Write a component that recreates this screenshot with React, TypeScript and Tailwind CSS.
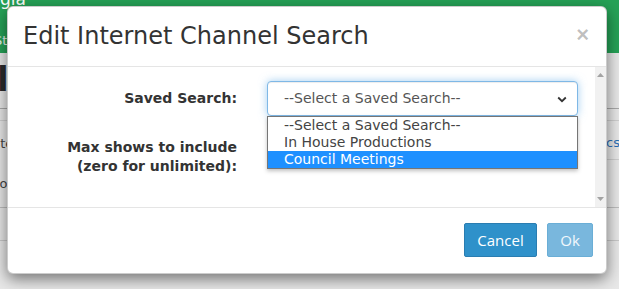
import React from "react";

const options = ["--Select a Saved Search--", "In House Productions", "Council Meetings"];

const EditSearchModal = () => {
  const selected = 2;

  return (
    <div className="absolute left-[7px] top-[6px] flex w-[600px] flex-col rounded-[6px] border border-black/20 bg-white shadow-[0_5px_15px_rgba(0,0,0,0.5)]">
      {/* header */}
      <div className="flex h-[60px] items-center justify-between border-b border-[#e5e5e5] pl-[15px] pr-[17px]">
        <h4 className="font-['DejaVu_Sans',sans-serif] text-[24px] leading-[29px] text-[#333]">
          Edit Internet Channel Search
        </h4>
        <span className="-mt-[4px] font-['Liberation_Sans',sans-serif] text-[22px] font-bold leading-none text-black/25">
          ×
        </span>
      </div>

      {/* body */}
      <div className="flex h-[141px] border-b border-[#e5e5e5]">
        <div className="flex flex-1 flex-col gap-[15px] pl-[15px] pr-[17px] pt-[14px] font-['DejaVu_Sans',sans-serif] text-[#333]">
          <div className="flex items-center gap-[30px]">
            <label className="w-[214px] text-right text-[14px] font-bold leading-[19px]">Saved Search:</label>
            <div className="relative w-[311px]">
              <div className="flex h-[35px] items-center justify-between rounded-[4px] border border-[#7fb8e6] bg-white pl-[16px] pr-[10px] shadow-[inset_0_1px_1px_rgba(0,0,0,0.075),0_0_8px_rgba(102,175,233,0.6)]">
                <span className="text-[14px] text-[#555]">--Select a Saved Search--</span>
                <svg width="10" height="7" viewBox="0 0 10 7" className="mt-[1px]">
                  <path d="M1.2 1.5 L5 5.2 L8.8 1.5" fill="none" stroke="#333" strokeWidth="1.8" />
                </svg>
              </div>
              <ul className="absolute left-0 right-0 top-[35px] z-10 border border-[#767676] bg-white shadow-[0_2px_4px_rgba(0,0,0,0.25)]">
                {options.map((o, i) => (
                  <li
                    key={o}
                    className={
                      i === selected
                        ? "h-[17px] bg-[#1e90ff] pl-[16px] text-[14px] leading-[17px] text-white"
                        : "h-[17px] pl-[16px] text-[14px] leading-[17px] text-[#444]"
                    }
                  >
                    {o}
                  </li>
                ))}
              </ul>
            </div>
          </div>
          <div className="flex items-start gap-[30px]">
            <label className="w-[214px] pt-[7px] text-right text-[14px] font-bold leading-[19px]">
              Max shows to include (zero for unlimited):
            </label>
            <div className="h-[34px] w-[311px]" />
          </div>
        </div>

        {/* scrollbar */}
        <div className="flex w-[14px] flex-col items-center justify-between bg-[#f1f1f1] py-[6px]">
          <svg width="7" height="4" viewBox="0 0 7 4">
            <path d="M0 4 L3.5 0 L7 4 Z" fill="#a3a3a3" />
          </svg>
          <svg width="7" height="4" viewBox="0 0 7 4">
            <path d="M0 0 L3.5 4 L7 0 Z" fill="#a3a3a3" />
          </svg>
        </div>
      </div>

      {/* footer */}
      <div className="flex justify-end gap-[10px] pb-[16px] pr-[13px] pt-[15px] font-['Open_Sans',sans-serif] text-[15px]">
        <button className="h-[34px] w-[73px] rounded-[2px] border border-[#2a7db1] bg-[#2f91ca] leading-[20px] text-white">
          Cancel
        </button>
        <button className="h-[34px] w-[46px] rounded-[2px] border border-[#6aaed6] bg-[#79b7dd] leading-[20px] text-white/90">
          Ok
        </button>
      </div>
    </div>
  );
};

export default function App() {
  return (
    <div className="relative h-[289px] w-[619px] overflow-hidden bg-[#e8e8e8] font-['DejaVu_Sans',sans-serif]">
      {/* page behind the dialog */}
      <div className="flex h-[53px] flex-col bg-[#26a257] text-white">
        <div className="-mt-[10px] text-[17px] leading-[18px]">gia</div>
        <div className="-ml-[6px] mt-[26px] text-[13px] leading-[14px] text-white/90">Ste</div>
      </div>
      <div className="flex h-[56px] items-start border-b border-[#a9a9a9]">
        <span className="-ml-[3px] mt-[8px] text-[34px] font-bold leading-[36px] text-[#2b2b2b]">l</span>
      </div>
      <div className="h-[12px] border-b border-[#cfcfcf]" />
      <div className="flex h-[87px] justify-between border-b border-[#bdbdbd] text-[13px]">
        <div className="flex flex-col pt-[15px] text-[#444]">
          <span className="-ml-[8px] leading-[16px]">Ste</span>
          <span className="-ml-[8px] mt-[24px] leading-[16px]">Pol</span>
        </div>
        <div className="flex w-[12px] flex-col pt-[14px]">
          <span className="-ml-[1px] h-[25px] border-b border-[#cfcfcf] leading-[16px] text-[#2a6fb5]">cs</span>
        </div>
      </div>
      <div className="h-[33px] border-b border-[#c8c8c8]" />

      <EditSearchModal />
    </div>
  );
}
